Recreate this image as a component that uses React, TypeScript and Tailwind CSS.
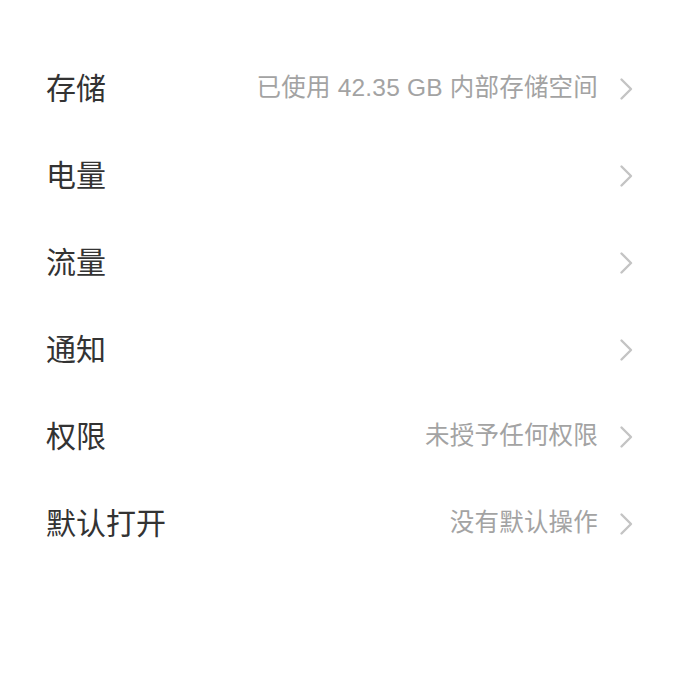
import React from "react";

const rows: { title: string; value?: string }[] = [
  { title: "存储", value: "已使用 42.35 GB 内部存储空间" },
  { title: "电量" },
  { title: "流量" },
  { title: "通知" },
  { title: "权限", value: "未授予任何权限" },
  { title: "默认打开", value: "没有默认操作" },
];

function Chevron() {
  return (
    <svg width="18" height="24" viewBox="0 0 18 24" className="shrink-0">
      <path d="M3.5 2.5 L13 12 L3.5 21.5" fill="none" stroke="#c4c4c4" strokeWidth="2.4" strokeLinecap="round" strokeLinejoin="round" />
    </svg>
  );
}

export default function App() {
  return (
    <div
      className="w-[680px] h-[680px] bg-white pt-[45px]"
      style={{ fontFamily: '"Liberation Sans", "Noto Sans CJK SC", sans-serif' }}
    >
      {rows.map((r) => (
        <div key={r.title} className="h-[87px] flex items-center pl-[46px] pr-[44px]">
          <div className="text-[30px] text-[#333333] flex-1 leading-none">{r.title}</div>
          {r.value && (
            <div className="text-[24.5px] text-[#a3a3a3] leading-none mr-[20px] tracking-[0.2px]">{r.value}</div>
          )}
          <Chevron />
        </div>
      ))}
    </div>
  );
}
